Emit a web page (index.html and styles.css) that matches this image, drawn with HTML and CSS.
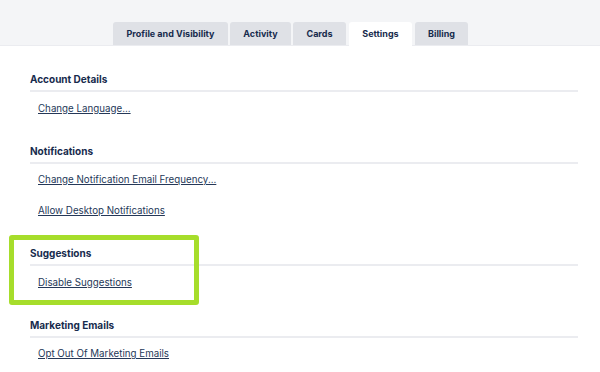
FILE: index.html
```html
<!DOCTYPE html>
<html lang="en">
<head>
  <meta charset="UTF-8" />
  <title>Settings</title>
  <link rel="stylesheet" href="styles.css">
</head>
<body>
  <div class="tab-bar">
    <div class="tabs">
      <div class="tab tab-profile">Profile and Visibility</div>
      <div class="tab tab-activity">Activity</div>
      <div class="tab tab-cards">Cards</div>
      <div class="tab tab-settings active">Settings</div>
      <div class="tab tab-billing">Billing</div>
    </div>
  </div>

  <div class="settings">
    <div class="section">
      <h3>Account Details</h3>
      <ul class="links">
        <li><a href="#">Change Language...</a></li>
      </ul>
    </div>

    <div class="section">
      <h3>Notifications</h3>
      <ul class="links">
        <li><a href="#">Change Notification Email Frequency...</a></li>
        <li><a href="#">Allow Desktop Notifications</a></li>
      </ul>
    </div>

    <div class="section">
      <h3>Suggestions</h3>
      <ul class="links">
        <li><a href="#">Disable Suggestions</a></li>
      </ul>
    </div>

    <div class="section">
      <h3>Marketing Emails</h3>
      <ul class="links">
        <li><a href="#">Opt Out Of Marketing Emails</a></li>
      </ul>
    </div>
  </div>

  <!-- highlight around the Suggestions block -->
  <div class="highlight"></div>
</body>
</html>
```

FILE: styles.css
```css
body {
  margin: 0;
  background: #ffffff;
  color: #172b4d;
  font-family: Inter, "Noto Sans", Arial, sans-serif;
  font-size: 9.75px;
  position: relative;
  height: 372px;
  overflow: hidden;
}
.tab-bar {
  background: #f4f5f7;
  height: 45px;
  display: flex;
  align-items: flex-end;
  border-bottom: 1px solid #ebecf0;
}
.tabs {
  display: flex;
  gap: 2px;
  padding-left: 113px;
}
.tab {
  height: 23px;
  line-height: 24px;
  background: #dfe1e6;
  border-radius: 3px 3px 0 0;
  font-size: 9px;
  font-weight: 700;
  text-align: center;
  box-sizing: border-box;
}
.tab-profile { width: 115px; }
.tab-activity { width: 61px; }
.tab-cards { width: 53px; }
.tab-settings { width: 63px; margin-left: 1px; }
.tab-billing { width: 53px; margin-left: 1px; }
.tab.active {
  background: #ffffff;
  height: 24px;
  margin-bottom: -1px;
}
.settings {
  padding: 25px 22px 0 30px;
}
.section + .section {
  margin-top: 26px;
}
.section h3 {
  margin: 0;
  font-size: 10px;
  line-height: 16px;
  font-weight: 700;
  padding-bottom: 3px;
  border-bottom: 2px solid #ebecf0;
}
.links {
  list-style: none;
  margin: 0;
  padding: 8.5px 0 0 8px;
  display: flex;
  flex-direction: column;
  gap: 15px;
}
.links li {
  line-height: 16px;
}
.links a {
  color: #253858;
  text-decoration: underline;
}
.highlight {
  position: absolute;
  left: 9px;
  top: 235px;
  width: 190px;
  height: 70px;
  box-sizing: border-box;
  border: 5px solid #a6dd2b;
  border-radius: 3px;
}
```
